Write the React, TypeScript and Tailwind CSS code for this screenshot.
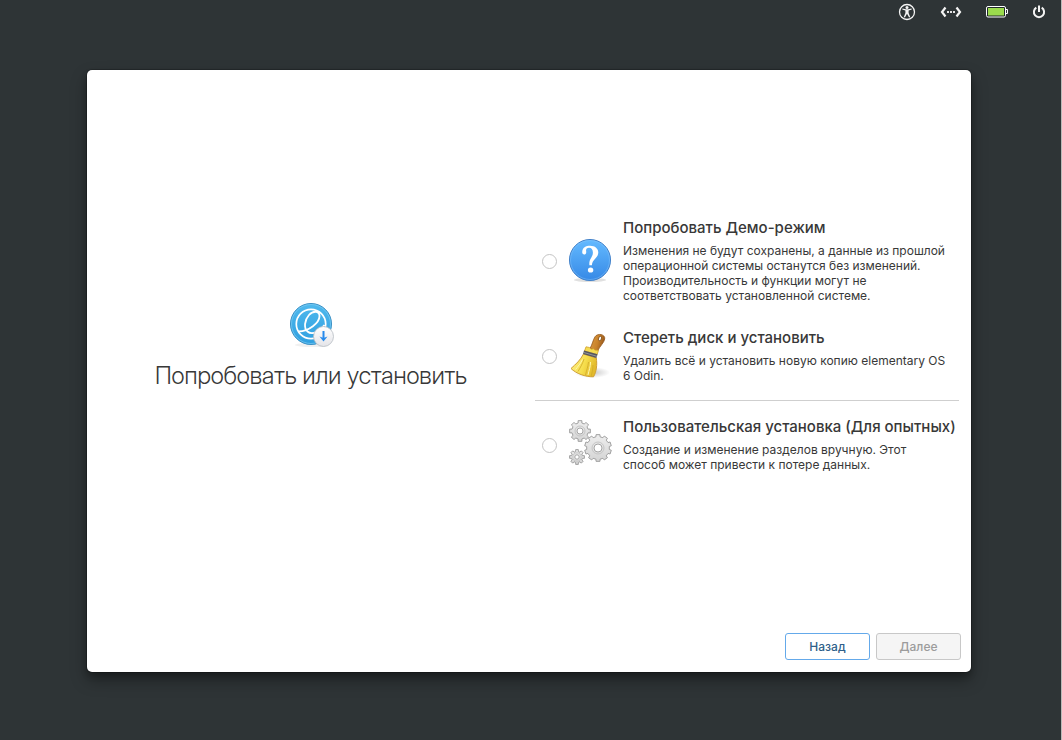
import type { ReactNode } from 'react';

function AccessibilityIcon() {
  return (
    <svg viewBox="0 0 18 18" className="size-[18px]" fill="none" stroke="#f4f4f4">
      <circle cx="9" cy="9" r="7.5" strokeWidth="1.3" />
      <circle cx="9" cy="4.6" r="1.5" fill="#f4f4f4" stroke="none" />
      <path d="M4.2 6.4 7.4 7.4V10L5.8 14l1.1.5L9 10.800l2.100 3.700L12.200 14l-1.600-4V7.400l3.200-1-.3-1L10.200 6.300H7.800L4.500 5.400z" fill="#f4f4f4" stroke="none" />
    </svg>
  );
}

function NetworkIcon() {
  return (
    <svg viewBox="0 0 22 12" className="h-3 w-[22px]" fill="none" stroke="#f4f4f4">
      <path d="M5.500 1.500 2 6l3.500 4.500M16.500 1.500 20 6l-3.500 4.500" strokeWidth="2.200" />
      <path d="M7 5h2v2H7zM10 5h2v2h-2zM13 5h2v2h-2z" fill="#e4e4e4" stroke="none" />
    </svg>
  );
}

function BatteryIcon() {
  return (
    <svg viewBox="0 0 22 12" className="h-3 w-[22px]">
      <rect x=".5" y=".5" width="19" height="10.500" rx="1.500" fill="#20282a" stroke="#fff" />
      <rect x="2" y="2" width="16" height="7.500" fill="#9bdb4d" />
      <path d="M20 3.500h1.500v4H20" fill="none" stroke="#fff" />
    </svg>
  );
}

function PowerIcon() {
  return (
    <svg viewBox="0 0 14 14" className="size-[14px]" fill="none" stroke="#f4f4f4" strokeWidth="2">
      <path d="M4.300 2.700a5.100 5.100 0 1 0 5.400 0M7 .5V7" />
    </svg>
  );
}

function InstallerIcon() {
  return (
    <svg viewBox="0 0 48 48" className="size-12" aria-hidden="true">
      <defs>
        <linearGradient id="disc" x2="0" y2="1">
          <stop stopColor="#50b9ed" />
          <stop offset="1" stopColor="#2f9fe0" />
        </linearGradient>
        <linearGradient id="badge" x2="0" y2="1">
          <stop stopColor="#fff" />
          <stop offset="1" stopColor="#e4e4e8" />
        </linearGradient>
      </defs>
      <ellipse cx="25" cy="44" rx="17" ry="2" fill="#000" opacity=".06" />
      <circle cx="24" cy="23" r="20.500" fill="url(#disc)" stroke="#3a8fc4" />
      <circle cx="24" cy="23" r="19.500" fill="none" stroke="#7ccdf4" strokeWidth=".7" />
      <g fill="none" stroke="#fff">
        <circle cx="24" cy="23" r="14.700" strokeWidth="1.700" />
        <path d="M11.500 30.500C22 30 32.500 22 32.500 15C32.500 9.500 26 9.500 22 14C17.500 19 16.500 27 20.500 30.500C25 34.500 32 31 37.500 24" strokeWidth="1.800" />
      </g>
      <circle cx="36.500" cy="35.500" r="10" fill="url(#badge)" stroke="#b5bbc2" strokeWidth=".8" />
      <path d="M36.500 30v7.500" stroke="#268aec" strokeWidth="2" />
      <path d="m32.500 35.500 4 5 4-5-4 1.500z" fill="#268aec" />
    </svg>
  );
}

function QuestionIcon() {
  return (
    <svg viewBox="0 0 48 48" className="size-12 shrink-0" aria-hidden="true">
      <defs>
        <linearGradient id="help" x2="0" y2="1">
          <stop stopColor="#64baff" />
          <stop offset="1" stopColor="#3689e6" />
        </linearGradient>
      </defs>
      <ellipse cx="24" cy="43" rx="16" ry="2" fill="#000" opacity=".12" />
      <circle cx="24" cy="23" r="20.500" fill="url(#help)" stroke="#3f7fc8" />
      <circle cx="24" cy="23" r="19.500" fill="none" stroke="#8bcaff" strokeWidth=".6" opacity=".7" />
      <path d="M16.300 16c-.6-5 3.200-7.200 7.800-7.200 5 0 8.200 2.800 8.200 6.800 0 5.400-6.200 6.600-6.400 12.700h-2.500c-.7-6.500 3.500-7.800 3.500-12.800 0-3-1.500-4.700-3.900-4.700-2.400 0-3.300 1.500-2.800 3.800.5 3.200-3.400 3.700-3.900 1.400z" fill="#fff" />
      <ellipse cx="24.600" cy="33" rx="2.700" ry="2.600" fill="#fff" />
    </svg>
  );
}

function BroomIcon() {
  return (
    <svg viewBox="0 0 48 48" className="size-12 shrink-0" aria-hidden="true">
      <defs>
        <linearGradient id="straw" x2="1" y2=".3">
          <stop stopColor="#fff08a" />
          <stop offset=".6" stopColor="#f6de4c" />
          <stop offset="1" stopColor="#e3bb2c" />
        </linearGradient>
        <linearGradient id="handle" x2="1" y2=".3">
          <stop stopColor="#dc9c42" />
          <stop offset=".6" stopColor="#c9832c" />
          <stop offset="1" stopColor="#9a5a1c" />
        </linearGradient>
        <radialGradient id="broomShade">
          <stop stopColor="#000" stopOpacity=".22" />
          <stop offset="1" stopColor="#000" stopOpacity="0" />
        </radialGradient>
      </defs>
      <g transform="translate(0 1)">
        <ellipse cx="26" cy="39.500" rx="18" ry="5.500" fill="url(#broomShade)" />
        <path d="M24 15.500C26.500 11 27 7 29 3.800 31.500-.2 39.500 1.200 38.700 6c-.6 3.600-4.700 7-7.200 12z" fill="url(#handle)" stroke="#93551a" strokeWidth=".8" />
        <ellipse cx="34" cy="5.500" rx="1.400" ry="2.400" transform="rotate(18 34 5.500)" fill="#fff" stroke="#7a4a16" strokeWidth=".8" />
        <path d="M17.500 21C14.500 27 10 31 5 35.500c5 5 14.500 8.500 22.500 8.300 3-5 3.800-12 2.800-18.800z" fill="url(#straw)" stroke="#d09f33" />
        <path d="M20 13.800 18.500 18l12.700 3.500 1.300-4.200-3.500-.2-1.500-1.300-2.500.4-1.500-1.700z" fill="#f5dc52" stroke="#d0a02c" strokeWidth=".8" />
        <path d="m18 17.500 13.500 3.800-1 3.700-13.500-4z" fill="#56575d" />
        <path d="m17.500 19.400 13.500 3.900" stroke="#a2a2a8" strokeWidth=".8" />
        <path d="M18 26c-1.500 5-4 9-6 12.500M22.500 29c-.5 5-2 8.500-3 13M27 32c0 4-1 8-2 11.500" stroke="#d1aa2a" strokeWidth=".8" fill="none" />
        <path d="M16.500 26.500c-2 4-4.500 7-7 10M24.500 29c0 5-1.500 8-2.500 13" stroke="#fff6b0" fill="none" />
      </g>
    </svg>
  );
}

function gearPath(cx: number, cy: number, outer: number, inner: number, teeth: number) {
  const points: string[] = [];
  const step = (Math.PI * 2) / teeth;
  for (let i = 0; i < teeth; i++) {
    const a = i * step - Math.PI / 2;
    const corners: [number, number][] = [
      [-0.29, inner],
      [-0.23, outer],
      [0.23, outer],
      [0.29, inner],
    ];
    for (const [offset, r] of corners) {
      const t = a + offset * step;
      points.push(`${cx + r * Math.cos(t)} ${cy + r * Math.sin(t)}`);
    }
  }
  return `M${points.join('L')}Z`;
}

const gears = [
  { cx: 14, cy: 10, outer: 10.5, inner: 8.2, hub: 3, teeth: 8 },
  { cx: 11, cy: 36, outer: 7.5, inner: 5.6, hub: 2.2, teeth: 8 },
  { cx: 32, cy: 27, outer: 13.5, inner: 11.4, hub: 4, teeth: 10 },
];

function GearsIcon() {
  return (
    <svg viewBox="0 0 48 48" className="size-12 shrink-0 overflow-visible" aria-hidden="true">
      <defs>
        <linearGradient id="steel" x2="0" y2="1">
          <stop stopColor="#eeeeee" />
          <stop offset="1" stopColor="#d4d4d4" />
        </linearGradient>
      </defs>
      {gears.map((g) => (
        <g key={g.cx} strokeLinejoin="round">
          <path d={gearPath(g.cx, g.cy, g.outer, g.inner, g.teeth)} fill="url(#steel)" stroke="#a0a0a0" strokeWidth="1" />
          <circle cx={g.cx} cy={g.cy} r={g.hub + 2} fill="none" stroke="#c6c6c6" />
          <circle cx={g.cx} cy={g.cy} r={g.hub} fill="#fff" stroke="#a6a6a6" strokeWidth="1" />
        </g>
      ))}
    </svg>
  );
}

function Option({ id, title, text, icon }: { id: string; title: string; text: string; icon: ReactNode }) {
  return (
    <label htmlFor={id} className="flex items-center gap-[9px] py-[13px] pr-3 pl-[7px]">
      <input
        id={id}
        type="radio"
        name="mode"
        className="size-[15px] shrink-0 appearance-none rounded-full border border-[#c4c4c4] bg-white checked:border-4 checked:border-[#3689e6]"
      />
      {icon}
      <span className="flex min-w-0 flex-1 flex-col gap-1.5">
        <span className="text-[15px] leading-[18px] font-medium whitespace-nowrap">{title}</span>
        <span className="text-[12px] leading-[15px]">{text}</span>
      </span>
    </label>
  );
}

export default function App() {
  return (
    <div className="flex min-h-screen flex-col border-r border-[#b9bbb8] bg-[#2e3436] font-['Inter','Noto_Sans',sans-serif] text-[#383838]">
      <header className="flex h-6 items-center justify-end gap-6 pr-[15px]">
        <button type="button" aria-label="Специальные возможности"><AccessibilityIcon /></button>
        <button type="button" aria-label="Сеть"><NetworkIcon /></button>
        <button type="button" aria-label="Батарея"><BatteryIcon /></button>
        <button type="button" aria-label="Питание"><PowerIcon /></button>
      </header>
      <main className="flex flex-1 pt-[46px] pr-[90px] pb-[68px] pl-[87px]">
        <form className="flex flex-1 flex-col rounded-[5px] bg-white shadow-[0_0_0_1px_rgba(0,0,0,0.2),0_4px_6px_rgba(0,0,0,0.2),0_8px_16px_rgba(0,0,0,0.35)]">
          <div className="grid flex-1 grid-cols-2 items-center gap-3 px-3 pt-3">
            <div className="flex flex-col items-center gap-3">
              <InstallerIcon />
              <h1 className="font-['Inter_Display','Inter','Noto_Sans',sans-serif] text-[24px] leading-[30px] font-light whitespace-nowrap">
                Попробовать или установить
              </h1>
            </div>
            <div role="radiogroup" aria-label="Попробовать или установить">
              <Option
                id="demo"
                icon={<QuestionIcon />}
                title="Попробовать Демо-режим"
                text="Изменения не будут сохранены, а данные из прошлой операционной системы останутся без изменений. Производительность и функции могут не соответствовать установленной системе."
              />
              <Option
                id="erase"
                icon={<BroomIcon />}
                title="Стереть диск и установить"
                text="Удалить всё и установить новую копию elementary OS 6 Odin."
              />
              <hr className="my-1 border-[#cfcfcf]" />
              <Option
                id="custom"
                icon={<GearsIcon />}
                title="Пользовательская установка (Для опытных)"
                text="Создание и изменение разделов вручную. Этот способ может привести к потере данных."
              />
            </div>
          </div>
          <footer className="flex justify-end gap-1.5 px-2.5 pt-6 pb-3 text-[12px] font-medium">
            <button type="button" className="h-[27px] w-[85px] rounded-[3px] border border-[#64a9ea] bg-white text-[#2f5f8a]">
              Назад
            </button>
            <button type="submit" disabled className="h-[27px] w-[85px] rounded-[3px] border border-[#c8c8c8] bg-[#f5f5f5] text-[#9c9c9c]">
              Далее
            </button>
          </footer>
        </form>
      </main>
    </div>
  );
}
